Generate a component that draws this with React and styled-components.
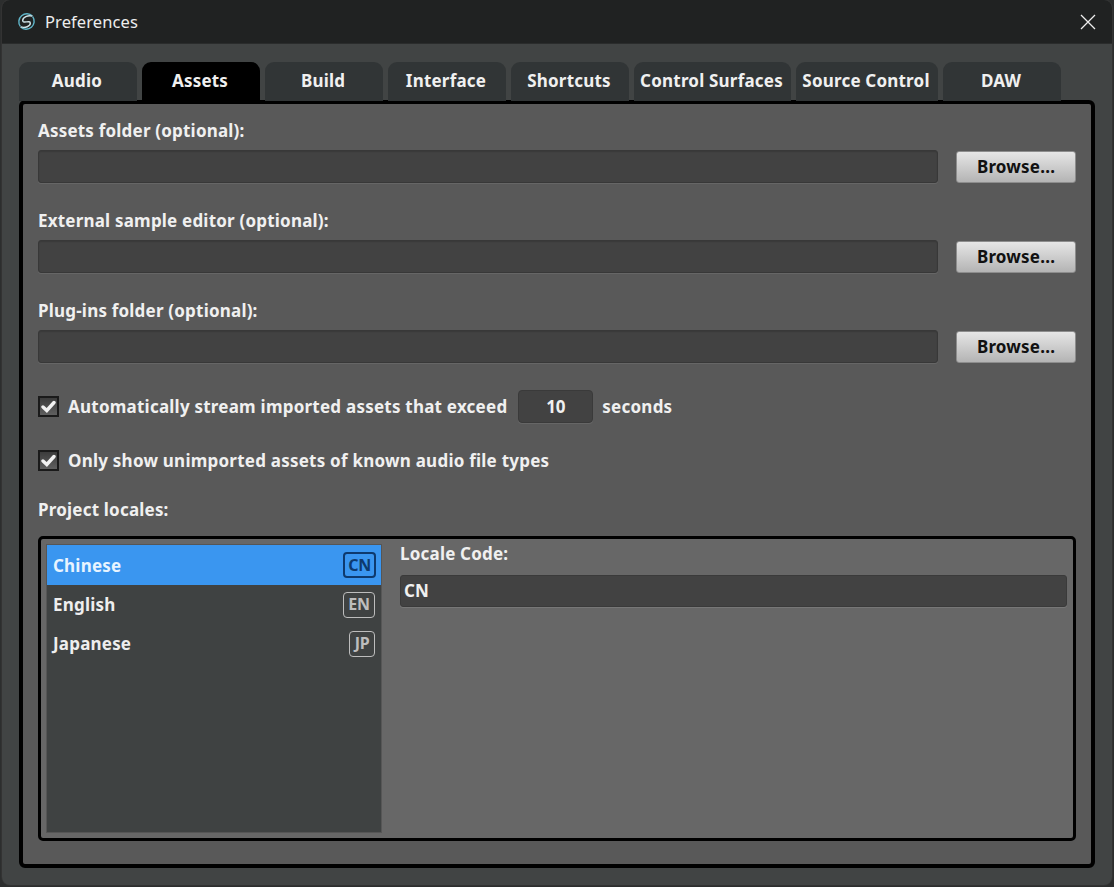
import React from "react";
import styled, { createGlobalStyle } from "styled-components";

const Global = createGlobalStyle`
  html, body { margin: 0; padding: 0; background: #2c2e2e; }
  body { width: 1114px; height: 887px; overflow: hidden; font-family: "Noto Sans", sans-serif; }
  * { box-sizing: border-box; }
`;
const Win = styled.div`
  margin: 0 2px; width: 1110px; height: 885px; background: #414444; border-radius: 8px;
  overflow: hidden; display: flex; flex-direction: column; box-shadow: 0 0 0 1px #333;
`;
const TitleBar = styled.div`
  height: 44px; flex: none; background: #202222; display: flex; align-items: center;
  padding: 0 15px; color: #eee; font-size: 16.5px; gap: 9px; border-bottom: 1px solid #2a2c2c;
`;
const TitleText = styled.span`flex: 1; letter-spacing: 0.1px;`;
const Close = styled.svg`width: 16px; height: 16px; margin-right: 1px;`;
const Tabs = styled.div`
  display: flex; gap: 5px; height: 39px; margin-top: 18px; padding-left: 17px; flex: none;
  position: relative; z-index: 1;
`;
const Tab = styled.div`
  width: ${p => p.$w || 118}px; height: 39px; border-radius: 9px 9px 0 0;
  background: ${p => (p.$active ? "#000" : "#313536")}; color: #f0f0f0;
  font-weight: 700; font-size: 17px; display: flex; align-items: center; justify-content: center;
  padding: 0 2px 3px 0; letter-spacing: 0.2px; white-space: nowrap;
`;
const Panel = styled.div`
  margin: -1px 17px 0 17px; height: 768px; flex: none; border: 4px solid #000; border-radius: 6px;
  background: #595959; padding: 16px 15px 0 15px; display: flex; flex-direction: column;
  color: #f0f0f0; position: relative;
`;
const Label = styled.div`
  font-weight: 700; font-size: 17px; line-height: 22px; letter-spacing: 0.2px; color: #f0f0f0;
`;
const PathRow = styled.div`
  display: flex; align-items: center; gap: 18px; margin: 8px 0 27px; height: 33px;
`;
const Field = styled.div`
  flex: 1; height: 33px; background: #424242; border: 1px solid #383838; border-radius: 3px;
  box-shadow: inset 0 1px 1px #3a3a3a, 0 1px 0 #666;
`;
const Browse = styled.button`
  width: 120px; height: 32px; flex: none; border: 1px solid #8d8d8d; border-radius: 3px;
  background: linear-gradient(#e6e6e6, #b4b4b4); color: #111; font: 700 17px "Noto Sans", sans-serif;
  letter-spacing: 0.2px; padding: 0;
`;
const CheckRow = styled.div`
  display: flex; align-items: center; height: 33px; margin-bottom: ${p => p.$mb}px;
`;
const Box = styled.span`
  width: 21px; height: 21px; flex: none; background: linear-gradient(#3c3c3c, #5f5f5f);
  border: 2px solid #1a1a1a; margin-right: 9px; display: flex; align-items: center; justify-content: center;
`;
const CheckText = styled.span`
  font-weight: 700; font-size: 17px; letter-spacing: 0.23px; white-space: nowrap;
  padding-bottom: 1px;
`;
const NumField = styled.div`
  width: 75px; height: 33px; margin: 0 9px 0 11px; background: #424242; border-radius: 4px;
  border: 1px solid #3a3a3a; box-shadow: 0 1px 0 #666; display: flex; align-items: center;
  justify-content: center; font-weight: 700; font-size: 17px; padding-bottom: 1px;
`;
const LocaleBox = styled.div`
  margin-top: 15px; height: 305px; border: 3px solid #000; border-radius: 5px; background: #676767;
  padding: 6px; display: flex; gap: 19px;
`;
const List = styled.div`
  width: 334px; height: 287px; flex: none; background: #3f4242; display: flex; flex-direction: column;
  box-shadow: 0 0 0 1px #565656;
`;
const Item = styled.div`
  height: ${p => (p.$sel ? 40 : 39)}px; flex: none; display: flex; align-items: center; justify-content: space-between;
  padding: 0 6px; font-weight: 700; font-size: 17px; letter-spacing: 0.2px;
  background: ${p => (p.$sel ? "#3a96f0" : "transparent")};
  color: ${p => (p.$sel ? "#e8f4ff" : "#eee")};
`;
const Code = styled.span`
  width: ${p => p.$w}px; height: 26px; border-radius: 4px; display: flex; align-items: center;
  justify-content: center; font-size: 16px; letter-spacing: -0.3px; font-weight: 700; padding-bottom: 1px;
  border: ${p => (p.$sel ? "2px solid #0e3a6e" : "1px solid #bdbdbd")};
  color: ${p => (p.$sel ? "#0e3a6e" : "#bdbdbd")};
  ${p => (p.$sel ? "margin-right: -1px;" : "")}
`;
const Detail = styled.div`flex: 1; display: flex; flex-direction: column; margin-top: -2px;`;
const LocaleField = styled.div`
  margin-top: 10px; height: 32px; background: #424242; border: 1px solid #3a3a3a; border-radius: 3px;
  box-shadow: 0 1px 0 #777; display: flex; align-items: center; padding: 0 3px 2px;
  font-weight: 700; font-size: 17px; color: #f0f0f0;
`;

const Check = () => (
  <svg width="15" height="13" viewBox="0 0 15 13">
    <path d="M2 7 L5.8 10.5 L13 2.5" fill="none" stroke="#f2f2f2" strokeWidth="3.4" strokeLinecap="round" />
  </svg>
);
const Logo = () => (
  <svg width="19" height="19" viewBox="0 0 20 20" fill="none" strokeWidth="1.5">
    <path d="M3.5 15.2 A8.4 8.4 0 0 1 16.2 4.3" stroke="#5fb4c8" />
    <path d="M16.5 4.8 A8.4 8.4 0 0 1 3.8 15.7" stroke="#5fb4c8" />
    <path d="M16.2 4.3 C11.5 3.2 5.8 5.2 6 9.2 C6.2 12.6 13.8 8.2 14 11.6 C14.2 15.2 8.5 17 3.8 15.7" stroke="#cfe3e8" />
  </svg>
);
const paths = ["Assets folder (optional):", "External sample editor (optional):", "Plug-ins folder (optional):"];
const tabs = [["Audio"], ["Assets", true], ["Build"], ["Interface"], ["Shortcuts"], ["Control Surfaces", false, 157], ["Source Control", false, 142], ["DAW"]];

export default function App() {
  return (
    <>
      <Global />
      <Win>
        <TitleBar>
          <Logo />
          <TitleText>Preferences</TitleText>
          <Close viewBox="0 0 16 16"><path d="M1 1L15 15M15 1L1 15" stroke="#eee" strokeWidth="1.3" /></Close>
        </TitleBar>
        <Tabs>
          {tabs.map(([t, a, w]) => <Tab key={t} $active={a} $w={w}>{t}</Tab>)}
        </Tabs>
        <Panel>
          {paths.map(p => (
            <React.Fragment key={p}>
              <Label>{p}</Label>
              <PathRow><Field /><Browse>Browse...</Browse></PathRow>
            </React.Fragment>
          ))}
          <CheckRow $mb={21}>
            <Box><Check /></Box>
            <CheckText>Automatically stream imported assets that exceed</CheckText>
            <NumField>10</NumField>
            <CheckText>seconds</CheckText>
          </CheckRow>
          <CheckRow $mb={22}>
            <Box><Check /></Box>
            <CheckText>Only show unimported assets of known audio file types</CheckText>
          </CheckRow>
          <Label>Project locales:</Label>
          <LocaleBox>
            <List>
              <Item $sel>Chinese<Code $sel $w={33}>CN</Code></Item>
              <Item>English<Code $w={32}>EN</Code></Item>
              <Item>Japanese<Code $w={26}>JP</Code></Item>
            </List>
            <Detail>
              <Label>Locale Code:</Label>
              <LocaleField>CN</LocaleField>
            </Detail>
          </LocaleBox>
        </Panel>
      </Win>
    </>
  );
}
